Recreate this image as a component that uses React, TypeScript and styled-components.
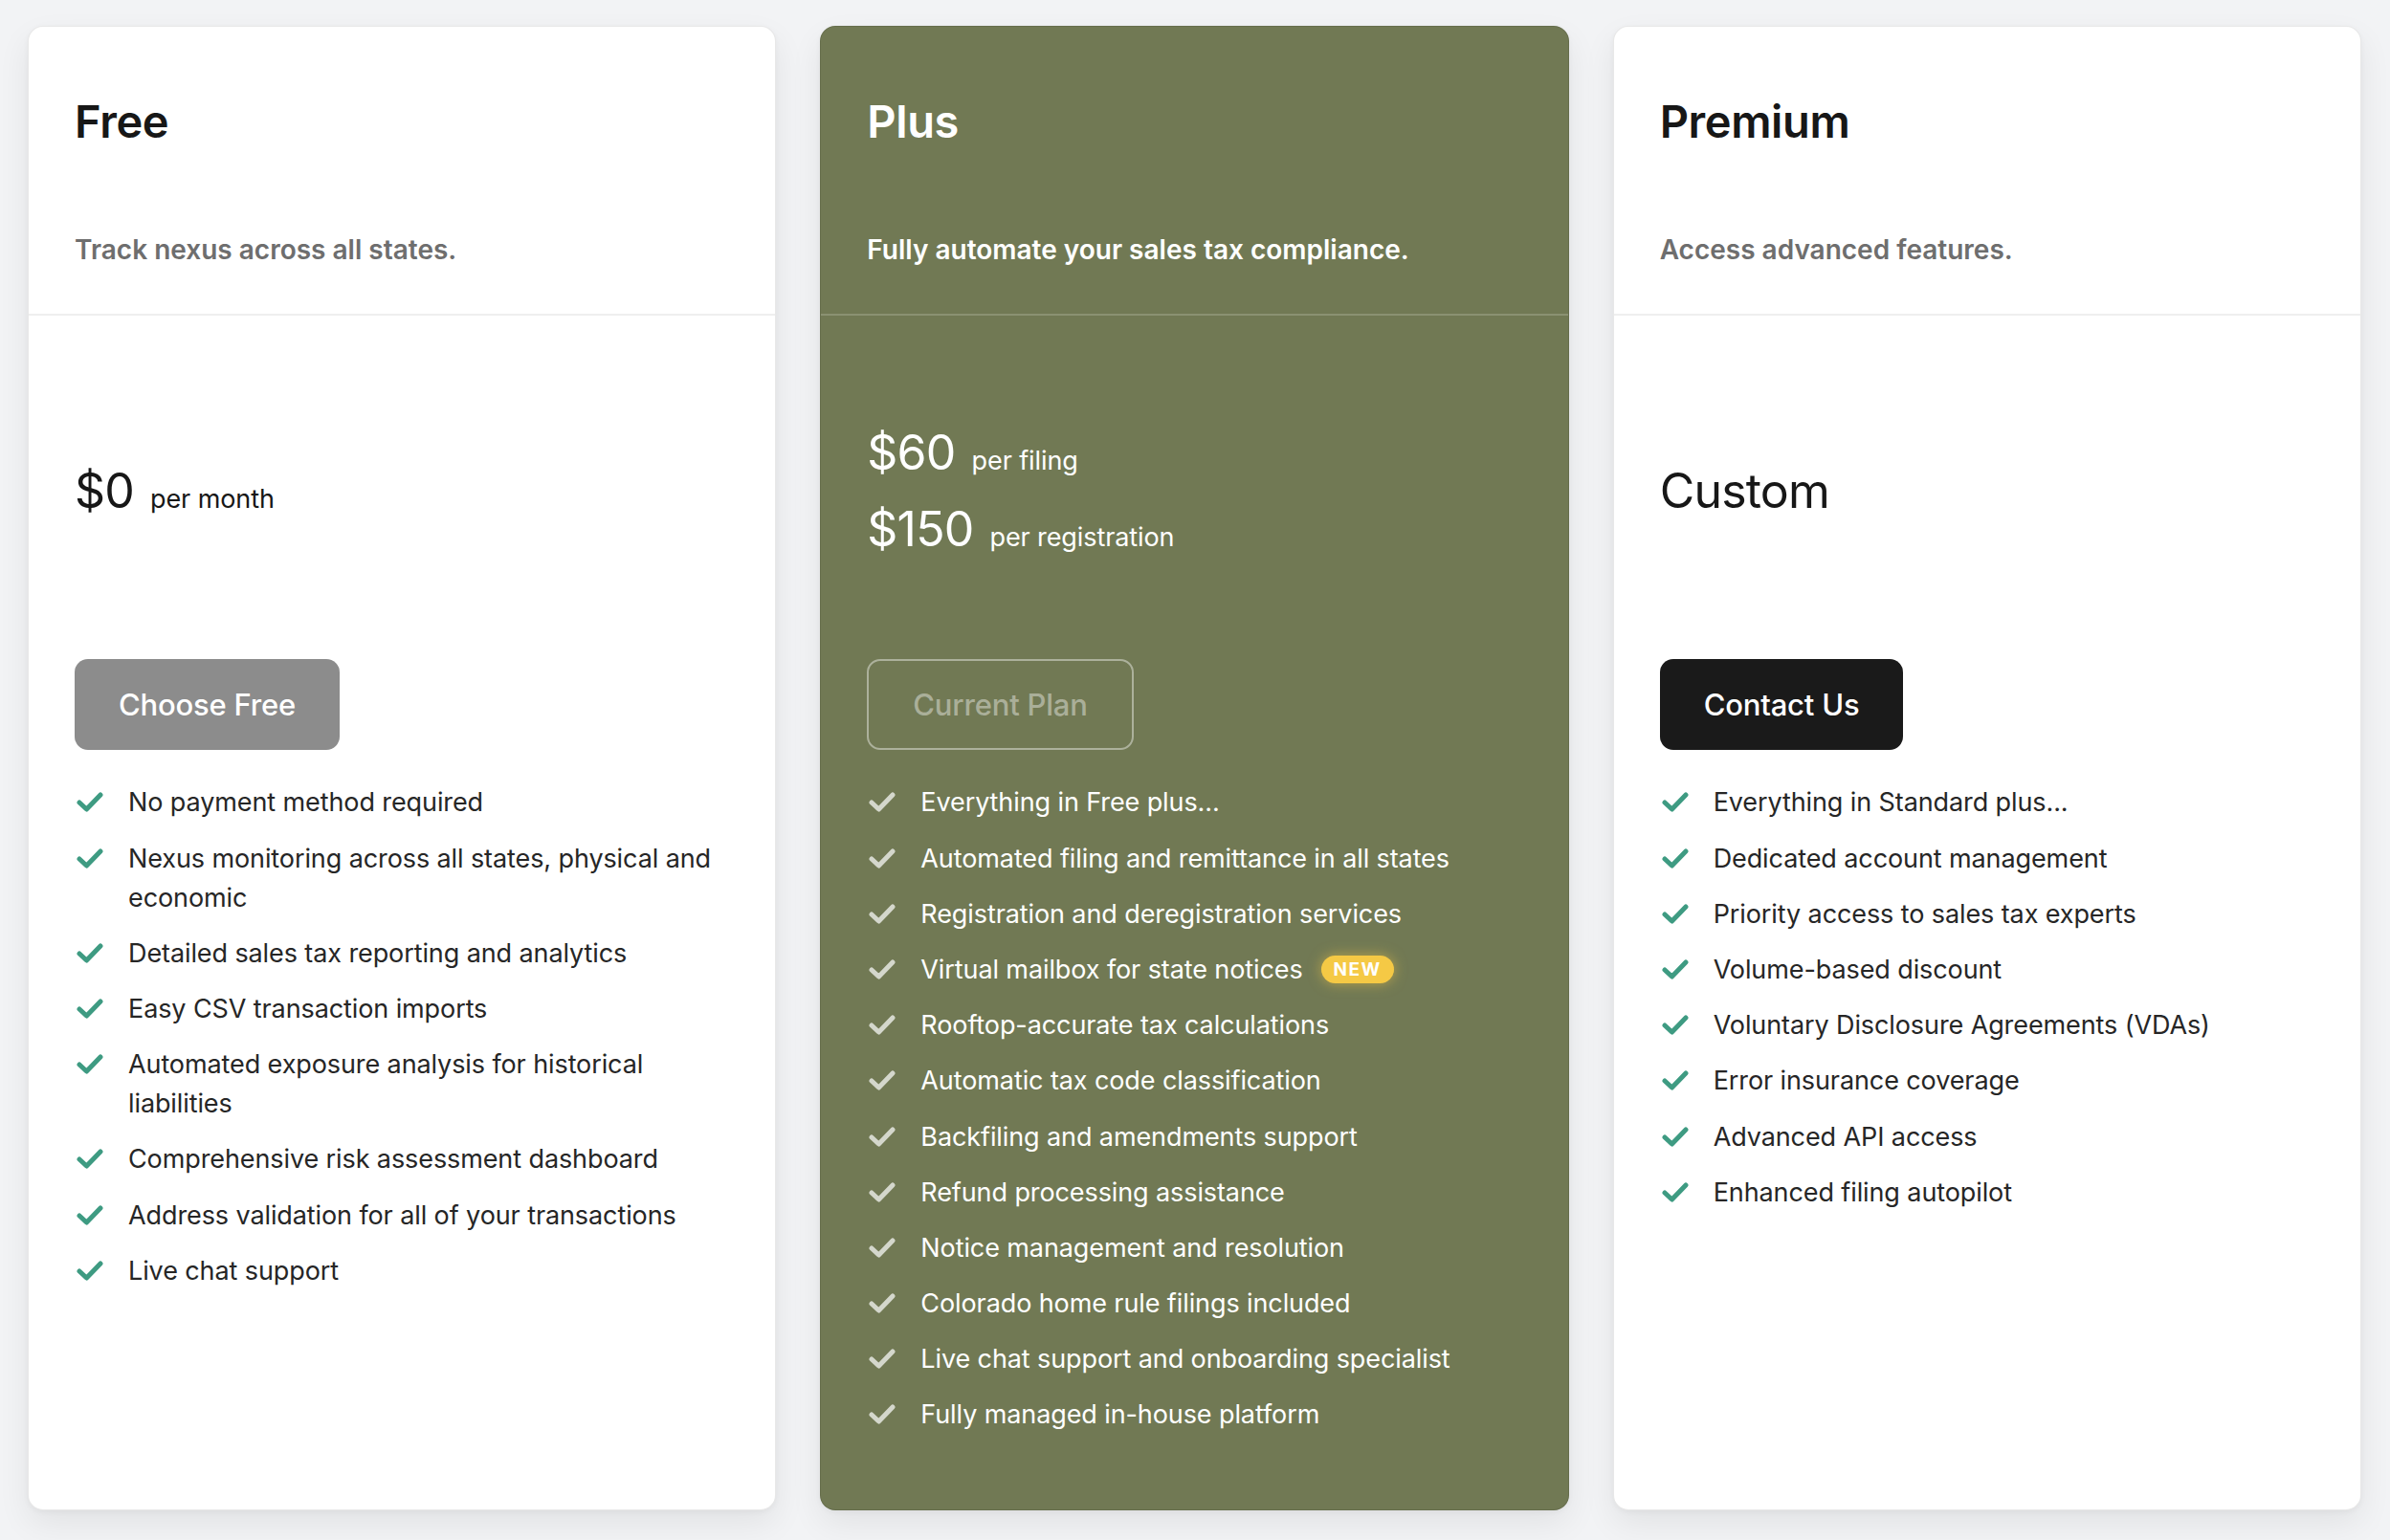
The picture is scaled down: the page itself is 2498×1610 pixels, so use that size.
import React from "react";
import styled, { createGlobalStyle, css } from "styled-components";

const GlobalStyle = createGlobalStyle`
  html, body {
    margin: 0;
    padding: 0;
    background: #f2f3f5;
  }
  body {
    font-family: Inter, "Noto Sans", "Liberation Sans", sans-serif;
    -webkit-font-smoothing: antialiased;
  }
  * { box-sizing: border-box; }
`;

type Tone = "light" | "accent";

const Page = styled.main`
  height: 100vh;
  padding: 27px 30px 31px 29px;
  display: grid;
  grid-template-columns: repeat(3, 1fr);
  gap: 46px;
  background: #f2f3f5;
`;

const Card = styled.section<{ $tone: Tone }>`
  display: flex;
  flex-direction: column;
  border-radius: 16px;
  border: 1.5px solid rgba(0, 0, 0, 0.09);
  box-shadow: 0 14px 34px rgba(0, 0, 0, 0.07), 0 2px 6px rgba(0, 0, 0, 0.04);
  overflow: hidden;
  background: ${(p) => (p.$tone === "accent" ? "#717954" : "#ffffff")};
  color: ${(p) => (p.$tone === "accent" ? "#ffffff" : "#171717")};
`;

const Header = styled.header<{ $tone: Tone }>`
  padding: 71px 48px 47px;
  border-bottom: 2px solid
    ${(p) => (p.$tone === "accent" ? "rgba(255,255,255,0.18)" : "#efefef")};
`;

const Title = styled.h2`
  margin: 0;
  font-size: 47px;
  line-height: 1.2;
  font-weight: 600;
  letter-spacing: -0.4px;
`;

const Subtitle = styled.p<{ $tone: Tone }>`
  margin: 87px 0 0;
  font-size: 28px;
  line-height: 39px;
  letter-spacing: 0;
  font-weight: 600;
  color: ${(p) => (p.$tone === "accent" ? "#ffffff" : "#6e6e6e")};
`;

const Body = styled.div`
  padding: 0 48px 50px;
  display: flex;
  flex-direction: column;
`;

const PriceArea = styled.div`
  height: 359px;
  padding-top: 6px;
  display: flex;
  flex-direction: column;
  justify-content: center;
`;

const PriceRow = styled.div`
  display: flex;
  align-items: baseline;
  gap: 17px;
  height: 80px;
  line-height: 80px;
`;

const Amount = styled.span`
  font-size: 50px;
  font-weight: 400;
  letter-spacing: -0.8px;
`;

const Unit = styled.span`
  font-size: 27px;
  line-height: 1;
  font-weight: 400;
  letter-spacing: -0.1px;
`;

type Variant = "muted" | "outline" | "dark";

const Button = styled.button<{ $variant: Variant }>`
  align-self: flex-start;
  height: 95px;
  padding: 0 46px;
  border-radius: 14px;
  font-family: inherit;
  font-size: 31px;
  font-weight: 500;
  letter-spacing: -0.2px;
  cursor: pointer;
  ${(p) =>
    p.$variant === "muted"
      ? css`
          background: #8c8c8c;
          color: #ffffff;
          border: none;
        `
      : p.$variant === "dark"
      ? css`
          background: #1a1a1a;
          color: #ffffff;
          border: none;
        `
      : css`
          background: transparent;
          color: rgba(255, 255, 255, 0.42);
          border: 2px solid rgba(255, 255, 255, 0.42);
        `}
`;

const Features = styled.ul`
  list-style: none;
  margin: 34px 0 0;
  padding: 0;
  display: flex;
  flex-direction: column;
  gap: 17.2px;
`;

const Feature = styled.li<{ $tone: Tone }>`
  display: flex;
  align-items: flex-start;
  gap: 26px;
  padding-left: 2px;
  font-size: 27px;
  line-height: 41px;
  letter-spacing: -0.1px;
  color: ${(p) => (p.$tone === "accent" ? "#ffffff" : "#262626")};
`;

const CheckIcon = styled.svg<{ $tone: Tone }>`
  flex: none;
  margin-top: 10px;
  color: ${(p) => (p.$tone === "accent" ? "rgba(255,255,255,0.7)" : "#3e9b82")};
`;

const FeatureText = styled.span`
  display: inline-flex;
  align-items: center;
  flex-wrap: wrap;
`;

const NewBadge = styled.span`
  display: inline-flex;
  align-items: center;
  justify-content: center;
  height: 29px;
  padding: 0 13px;
  margin-left: 19px;
  border-radius: 999px;
  background: #f5c945;
  color: #ffffff;
  font-size: 19px;
  line-height: 1;
  font-weight: 700;
  letter-spacing: 1.4px;
  box-shadow: 0 0 14px rgba(245, 201, 69, 0.55);
`;

const Check = ({ tone }: { tone: Tone }) => (
  <CheckIcon $tone={tone} width="28" height="21" viewBox="0 0 28 21" fill="none">
    <path
      d="M3 11 L10.5 18 L25 3"
      stroke="currentColor"
      strokeWidth="5"
      strokeLinecap="round"
      strokeLinejoin="round"
    />
  </CheckIcon>
);

type Plan = {
  name: string;
  tagline: string;
  tone: Tone;
  prices: { amount: string; unit?: string }[];
  button: { label: string; variant: Variant };
  features: { text: string; isNew?: boolean }[];
};

const plans: Plan[] = [
  {
    name: "Free",
    tagline: "Track nexus across all states.",
    tone: "light",
    prices: [{ amount: "$0", unit: "per month" }],
    button: { label: "Choose Free", variant: "muted" },
    features: [
      { text: "No payment method required" },
      { text: "Nexus monitoring across all states, physical and economic" },
      { text: "Detailed sales tax reporting and analytics" },
      { text: "Easy CSV transaction imports" },
      { text: "Automated exposure analysis for historical liabilities" },
      { text: "Comprehensive risk assessment dashboard" },
      { text: "Address validation for all of your transactions" },
      { text: "Live chat support" },
    ],
  },
  {
    name: "Plus",
    tagline: "Fully automate your sales tax compliance.",
    tone: "accent",
    prices: [
      { amount: "$60", unit: "per filing" },
      { amount: "$150", unit: "per registration" },
    ],
    button: { label: "Current Plan", variant: "outline" },
    features: [
      { text: "Everything in Free plus..." },
      { text: "Automated filing and remittance in all states" },
      { text: "Registration and deregistration services" },
      { text: "Virtual mailbox for state notices", isNew: true },
      { text: "Rooftop-accurate tax calculations" },
      { text: "Automatic tax code classification" },
      { text: "Backfiling and amendments support" },
      { text: "Refund processing assistance" },
      { text: "Notice management and resolution" },
      { text: "Colorado home rule filings included" },
      { text: "Live chat support and onboarding specialist" },
      { text: "Fully managed in-house platform" },
    ],
  },
  {
    name: "Premium",
    tagline: "Access advanced features.",
    tone: "light",
    prices: [{ amount: "Custom" }],
    button: { label: "Contact Us", variant: "dark" },
    features: [
      { text: "Everything in Standard plus..." },
      { text: "Dedicated account management" },
      { text: "Priority access to sales tax experts" },
      { text: "Volume-based discount" },
      { text: "Voluntary Disclosure Agreements (VDAs)" },
      { text: "Error insurance coverage" },
      { text: "Advanced API access" },
      { text: "Enhanced filing autopilot" },
    ],
  },
];

export default function App() {
  return (
    <>
      <GlobalStyle />
      <Page>
        {plans.map((plan) => (
          <Card key={plan.name} $tone={plan.tone}>
            <Header $tone={plan.tone}>
              <Title>{plan.name}</Title>
              <Subtitle $tone={plan.tone}>{plan.tagline}</Subtitle>
            </Header>
            <Body>
              <PriceArea>
                {plan.prices.map((p) => (
                  <PriceRow key={p.amount}>
                    <Amount>{p.amount}</Amount>
                    {p.unit && <Unit>{p.unit}</Unit>}
                  </PriceRow>
                ))}
              </PriceArea>
              <Button $variant={plan.button.variant}>{plan.button.label}</Button>
              <Features>
                {plan.features.map((f) => (
                  <Feature key={f.text} $tone={plan.tone}>
                    <Check tone={plan.tone} />
                    <FeatureText>
                      {f.text}
                      {f.isNew && <NewBadge>NEW</NewBadge>}
                    </FeatureText>
                  </Feature>
                ))}
              </Features>
            </Body>
          </Card>
        ))}
      </Page>
    </>
  );
}
